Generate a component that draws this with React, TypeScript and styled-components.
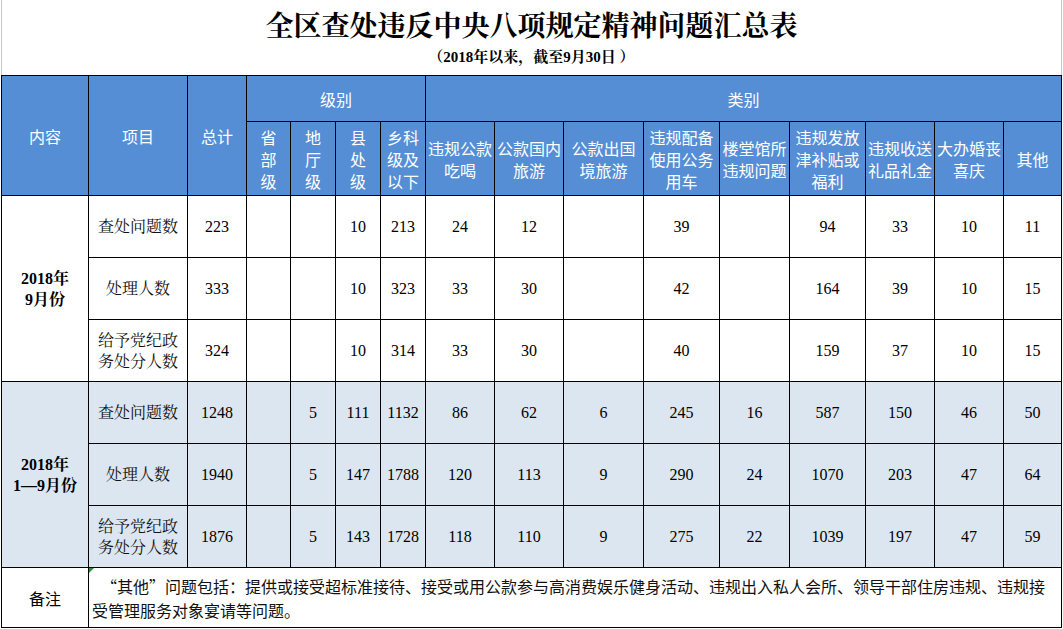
import React from 'react';
import styled, { createGlobalStyle } from 'styled-components';

const GlobalStyle = createGlobalStyle`
  html, body { margin: 0; padding: 0; background: #ffffff; }
  body { font-family: "Noto Sans CJK SC", sans-serif; }
`;

const SANS = `"Noto Sans CJK SC", "Liberation Sans", sans-serif`;
const SERIF = `"Liberation Serif", "Noto Serif CJK SC", "Noto Sans CJK SC", serif`;

const Page = styled.div`
  width: 1063px;
  height: 629px;
  overflow: hidden;
  background: #ffffff;
  display: flex;
  flex-direction: column;
`;

const TitleBlock = styled.header`
  box-sizing: border-box;
  margin-left: 1px;
  width: 1061px;
  height: 75px;
  border-left: 1px solid #c8c8c8;
  border-right: 1px solid #c8c8c8;
  display: flex;
  flex-direction: column;
  align-items: center;
`;

const Title = styled.h1`
  margin: 10px 0 0;
  font-family: ${SERIF};
  font-size: 28px;
  line-height: 34px;
  font-weight: 700;
  color: #000;
`;

const Subtitle = styled.div`
  margin-top: 4px;
  font-family: ${SERIF};
  font-size: 15px;
  line-height: 18px;
  font-weight: 700;
  color: #000;
`;

const Sheet = styled.table`
  margin-left: 1px;
  width: 1061px;
  table-layout: fixed;
  border-collapse: collapse;
`;

const Row = styled.tr<{ $h: number }>`
  height: ${(p) => p.$h}px;
`;

const HeadCell = styled.th`
  padding: 0;
  border: 1px solid #000;
  background: #558ed5;
  color: #ffffff;
  font-family: ${SANS};
  font-size: 16px;
  line-height: 22px;
  font-weight: 400;
  text-align: center;
  vertical-align: middle;
`;

const BodyCell = styled.td<{ $shade: boolean }>`
  padding: 0;
  border: 1px solid #000;
  background: ${(p) => (p.$shade ? '#dce6f1' : '#ffffff')};
  color: #000;
  text-align: center;
  vertical-align: middle;
`;

const PeriodCell = styled(BodyCell)`
  font-family: ${SERIF};
  font-size: 16px;
  line-height: 21px;
  font-weight: 700;
`;

const ItemCell = styled(BodyCell)`
  font-family: ${SERIF};
  font-size: 16px;
  line-height: 21px;
  color: #111;
`;

const NumCell = styled(BodyCell)`
  font-family: ${SERIF};
  font-size: 16px;
  line-height: 20px;
`;

const NoteLabel = styled.td`
  padding: 0;
  border: 1px solid #000;
  background: #fff;
  font-family: ${SANS};
  font-size: 16px;
  text-align: center;
  vertical-align: middle;
  color: #000;
`;

const NoteText = styled.td`
  position: relative;
  padding: 0 3px;
  border: 1px solid #000;
  background: #fff;
  font-family: ${SANS};
  font-size: 16px;
  line-height: 24px;
  text-align: left;
  vertical-align: middle;
  color: #111;
  &::before {
    content: '';
    position: absolute;
    left: 0;
    top: 0;
    border-top: 5px solid #2f8f2f;
    border-right: 5px solid transparent;
  }
`;

const Indent = styled.span`
  display: inline-block;
  width: 9px;
`;

const COLS = [87, 99, 59, 44, 45, 45, 45, 69, 69, 80, 76, 70, 76, 69, 69, 58];

const SUB_HEADS = [
  '省|部|级',
  '地|厅|级',
  '县|处|级',
  '乡科|级及|以下',
  '违规公款|吃喝',
  '公款国内|旅游',
  '公款出国|境旅游',
  '违规配备|使用公务|用车',
  '楼堂馆所|违规问题',
  '违规发放|津补贴或|福利',
  '违规收送|礼品礼金',
  '大办婚丧|喜庆',
  '其他',
];

type Group = {
  period: string[];
  shade: boolean;
  rows: { item: string; values: (number | '')[] }[];
};

const GROUPS: Group[] = [
  {
    period: ['2018年', '9月份'],
    shade: false,
    rows: [
      { item: '查处问题数', values: [223, '', '', 10, 213, 24, 12, '', 39, '', 94, 33, 10, 11] },
      { item: '处理人数', values: [333, '', '', 10, 323, 33, 30, '', 42, '', 164, 39, 10, 15] },
      { item: '给予党纪政|务处分人数', values: [324, '', '', 10, 314, 33, 30, '', 40, '', 159, 37, 10, 15] },
    ],
  },
  {
    period: ['2018年', '1—9月份'],
    shade: true,
    rows: [
      { item: '查处问题数', values: [1248, '', 5, 111, 1132, 86, 62, 6, 245, 16, 587, 150, 46, 50] },
      { item: '处理人数', values: [1940, '', 5, 147, 1788, 120, 113, 9, 290, 24, 1070, 203, 47, 64] },
      { item: '给予党纪政|务处分人数', values: [1876, '', 5, 143, 1728, 118, 110, 9, 275, 22, 1039, 197, 47, 59] },
    ],
  },
];

const Lines = ({ text }: { text: string }) => {
  const parts = text.split('|');
  return (
    <>
      {parts.map((p, i) => (
        <React.Fragment key={i}>
          {p}
          {i < parts.length - 1 && <br />}
        </React.Fragment>
      ))}
    </>
  );
};

export default function App() {
  return (
    <Page>
      <GlobalStyle />
      <TitleBlock>
        <Title>全区查处违反中央八项规定精神问题汇总表</Title>
        <Subtitle>（2018年以来，截至9月30日 ）</Subtitle>
      </TitleBlock>
      <Sheet>
        <colgroup>
          {COLS.map((w, i) => (
            <col key={i} style={{ width: w }} />
          ))}
        </colgroup>
        <thead>
          <Row $h={46}>
            <HeadCell rowSpan={2}>内容</HeadCell>
            <HeadCell rowSpan={2}>项目</HeadCell>
            <HeadCell rowSpan={2}>总计</HeadCell>
            <HeadCell colSpan={4}>级别</HeadCell>
            <HeadCell colSpan={9}>类别</HeadCell>
          </Row>
          <Row $h={74}>
            {SUB_HEADS.map((h, i) => (
              <HeadCell key={i}>
                <Lines text={h} />
              </HeadCell>
            ))}
          </Row>
        </thead>
        <tbody>
          {GROUPS.map((g, gi) =>
            g.rows.map((r, ri) => (
              <Row $h={62} key={`${gi}-${ri}`}>
                {ri === 0 && (
                  <PeriodCell $shade={g.shade} rowSpan={3}>
                    {g.period[0]}
                    <br />
                    {g.period[1]}
                  </PeriodCell>
                )}
                <ItemCell $shade={g.shade}>
                  <Lines text={r.item} />
                </ItemCell>
                {r.values.map((v, vi) => (
                  <NumCell $shade={g.shade} key={vi}>
                    {v}
                  </NumCell>
                ))}
              </Row>
            ))
          )}
          <Row $h={60}>
            <NoteLabel>备注</NoteLabel>
            <NoteText colSpan={15}>
              <Indent />
              “其他”问题包括：提供或接受超标准接待、接受或用公款参与高消费娱乐健身活动、违规出入私人会所、领导干部住房违规、违规接
              <br />
              受管理服务对象宴请等问题。
            </NoteText>
          </Row>
        </tbody>
      </Sheet>
    </Page>
  );
}
